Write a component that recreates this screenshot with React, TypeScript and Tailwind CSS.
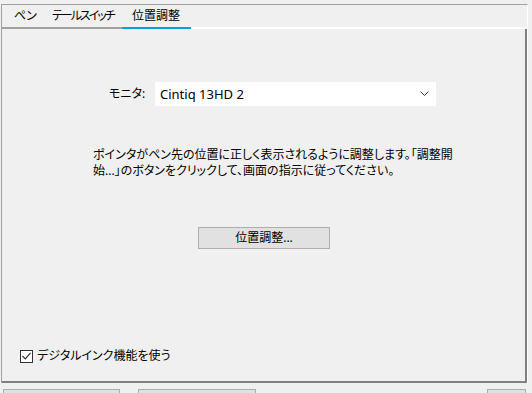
export default function App() {
  return (
    <div className="w-[532px] h-[393px] overflow-hidden bg-[#f0f0f0] text-black text-[12px] leading-[16px] font-['Noto_Sans','Noto_Sans_CJK_JP',sans-serif] [font-feature-settings:'palt']">
      {/* tab control */}
      <div className="ml-[1px] mt-[4px] w-[527px] border-t border-l border-[#a0a0a0] border-r border-r-white">
        <div className="flex h-[24px] whitespace-nowrap">
          <div className="w-[41px] pl-[12px] pt-[3px] border-b-2 border-[#a0a0a0]">ペン</div>
          <div className="w-[79px] pl-[9px] pt-[3px] border-b-2 border-[#a0a0a0] tracking-[-2px]">テールスイッチ</div>
          <div className="w-[69px] pl-[10px] pt-[3px] border-b-2 border-[#00a2d8]">位置調整</div>
          <div className="flex-1 border-b-2 border-white" />
        </div>

        {/* panel */}
        <div className="h-[354px] flex flex-col border-r-2 border-b-2 border-[#808080]">
          <div className="flex items-center mt-[53px] h-[24px]">
            <span className="ml-[107px] w-[46px]">モニタ:</span>
            <div className="w-[281px] h-[24px] bg-white flex items-center justify-between pl-[5px] pr-[7px]">
              <span className="text-[13px]">Cintiq 13HD 2</span>
              <svg width="9" height="6" viewBox="0 0 9 6" fill="none" stroke="#333" strokeWidth="1">
                <path d="M0.5 0.5 L4.5 4.5 L8.5 0.5" />
              </svg>
            </div>
          </div>

          <p className="mt-[41px] ml-[91px] whitespace-nowrap leading-[16px]">
            ポインタがペン先の位置に正しく表示されるように調整します。「調整開
            <br />
            始...」のボタンをクリックして、画面の指示に従ってください。
          </p>

          <button className="mt-[48px] ml-[196px] w-[132px] h-[22px] bg-[#e1e1e1] border border-[#adadad] text-[12px] leading-[20px]">
            位置調整...
          </button>

          <label className="mt-auto mb-[17px] ml-[18px] flex items-center gap-[4px]">
            <span className="w-[13px] h-[13px] border border-[#333] bg-white flex items-center justify-center">
              <svg width="9" height="8" viewBox="0 0 9 8" fill="none" stroke="#333" strokeWidth="1.2">
                <path d="M0.5 4 L3.3 6.8 L8.5 0.8" />
              </svg>
            </span>
            <span>デジタルインク機能を使う</span>
          </label>
        </div>
      </div>

      {/* bottom buttons, cut off */}
      <div className="flex mt-[6px]">
        <div className="ml-[3px] w-[117px] h-[20px] bg-[#e1e1e1] border border-[#adadad]" />
        <div className="ml-[18px] w-[118px] h-[20px] bg-[#e1e1e1] border border-[#adadad]" />
        <div className="ml-[231px] w-[39px] h-[20px] bg-[#e1e1e1] border border-[#adadad]" />
      </div>
    </div>
  )
}
